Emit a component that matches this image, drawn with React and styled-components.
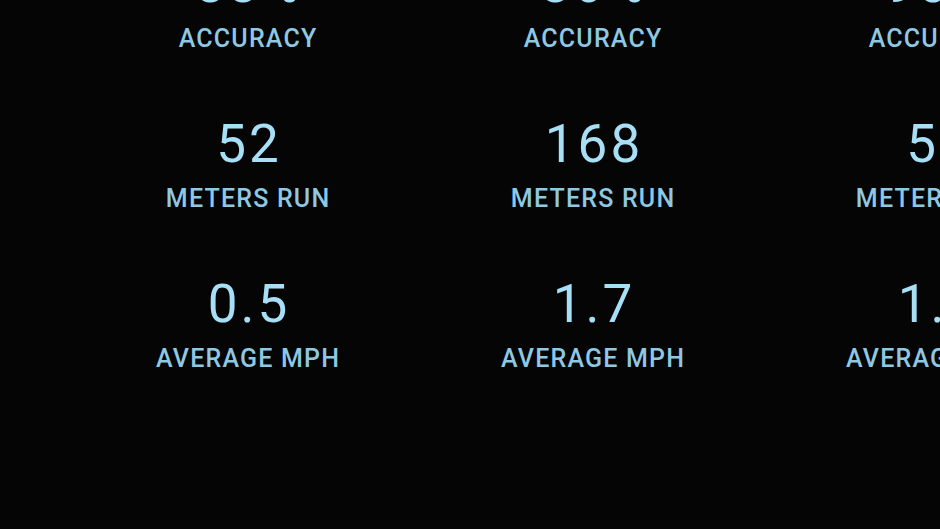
import React from "react";
import styled, { createGlobalStyle } from "styled-components";

const GlobalStyle = createGlobalStyle`
  html, body {
    margin: 0;
    background: #050505;
    overflow: hidden;
  }
  body {
    font-family: Roboto, "Liberation Sans", sans-serif;
  }
`;

const Page = styled.div`
  width: 940px;
  height: 529px;
  overflow: hidden;
  background: #050505;
`;

const Grid = styled.div`
  display: grid;
  grid-template-columns: repeat(3, 345px);
  row-gap: 64px;
  padding-left: 75px;
  margin-top: -44px;
`;

const Stat = styled.div`
  display: flex;
  flex-direction: column;
  align-items: center;
`;

const Value = styled.div`
  font-size: 53px;
  line-height: 56px;
  font-weight: 400;
  color: #a6dff6;
  letter-spacing: 3px;
  padding-left: 3px;
  white-space: nowrap;
`;

const Label = styled.div`
  margin-top: 14px;
  font-size: 25px;
  line-height: 26px;
  font-weight: 500;
  color: #8ec8e2;
  letter-spacing: 1.2px;
  padding-left: 1.2px;
  text-transform: uppercase;
  white-space: nowrap;
`;

const stats = [
  ["88%", "86%", "90%"],
  ["52", "168", "57"],
  ["0.5", "1.7", "1.6"],
];

const labels = ["Accuracy", "Meters Run", "Average MPH"];

export default function App() {
  return (
    <Page>
      <GlobalStyle />
      <Grid>
        {stats.map((row, r) =>
          row.map((value, c) => (
            <Stat key={`${r}-${c}`}>
              <Value>{value}</Value>
              <Label>{labels[r]}</Label>
            </Stat>
          ))
        )}
      </Grid>
    </Page>
  );
}
